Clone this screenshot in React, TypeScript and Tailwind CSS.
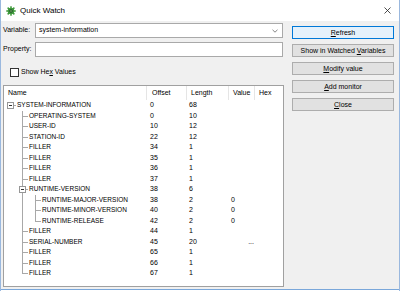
// Quick Watch — debugger dialog (COBOL group item view)

type Row = {
  name: string
  level: number
  open?: boolean
  last?: boolean
  off: string
  len: string
  value?: string
}

const ROWS: Row[] = [
  { name: 'SYSTEM-INFORMATION',    level: 0, open: true, off: '0',  len: '68' },
  { name: 'OPERATING-SYSTEM',      level: 1, off: '0',  len: '10' },
  { name: 'USER-ID',               level: 1, off: '10', len: '12' },
  { name: 'STATION-ID',            level: 1, off: '22', len: '12' },
  { name: 'FILLER',                level: 1, off: '34', len: '1' },
  { name: 'FILLER',                level: 1, off: '35', len: '1' },
  { name: 'FILLER',                level: 1, off: '36', len: '1' },
  { name: 'FILLER',                level: 1, off: '37', len: '1' },
  { name: 'RUNTIME-VERSION',       level: 1, open: true, off: '38', len: '6' },
  { name: 'RUNTIME-MAJOR-VERSION', level: 2, off: '38', len: '2', value: '0' },
  { name: 'RUNTIME-MINOR-VERSION', level: 2, off: '40', len: '2', value: '0' },
  { name: 'RUNTIME-RELEASE',       level: 2, last: true, off: '42', len: '2', value: '0' },
  { name: 'FILLER',                level: 1, off: '44', len: '1' },
  { name: 'SERIAL-NUMBER',         level: 1, off: '45', len: '20', value: '...' },
  { name: 'FILLER',                level: 1, off: '65', len: '1' },
  { name: 'FILLER',                level: 1, off: '66', len: '1' },
  { name: 'FILLER',                level: 1, last: true, off: '67', len: '1' },
]

// x of the connector line per tree level (relative to the Name cell)
const LINE_X = [6, 18, 31]

function TreeName({ row }: { row: Row }) {
  const x = LINE_X[row.level]
  return (
    <div className="relative h-full">
      {/* parent's line keeps going while we're inside RUNTIME-VERSION */}
      {row.level >= 2 && (
        <span className="absolute top-0 bottom-0 w-px bg-[#a8a8a8]" style={{ left: LINE_X[1] }} />
      )}
      {row.level >= 1 && (
        <span
          className={`absolute top-0 w-px bg-[#a8a8a8] ${row.last ? 'h-[5px]' : 'bottom-0'}`}
          style={{ left: x }}
        />
      )}
      <span className="absolute top-[5px] h-px w-[6px] bg-[#a8a8a8]" style={{ left: x }} />
      {row.open && (
        <span
          className="absolute top-[2px] w-[7px] h-[7px] border border-[#969696] bg-white flex items-center justify-center"
          style={{ left: x - 3 }}
        >
          <span className="w-[3px] h-px bg-[#333]" />
        </span>
      )}
      <span className="absolute top-0 text-[6.5px] whitespace-nowrap" style={{ left: x + 7 }}>
        {row.name}
      </span>
    </div>
  )
}

function GearIcon() {
  return (
    <svg width="10" height="10" viewBox="0 0 20 20">
      <g fill="#3f9a3c">
        {[0, 45, 90, 135, 180, 225, 270, 315].map(a => (
          <rect key={a} x="8.5" y="0.5" width="3" height="5" transform={`rotate(${a} 10 10)`} />
        ))}
        <circle cx="10" cy="10" r="6.5" />
      </g>
      <circle cx="10" cy="10" r="3.5" fill="#1f4d2a" />
      <circle cx="10" cy="10" r="1.5" fill="#9ad07a" />
    </svg>
  )
}

function DlgButton({ pre, acc, post, primary }: { pre?: string; acc: string; post?: string; primary?: boolean }) {
  return (
    <button
      type="button"
      className={[
        'h-[13px] w-[102px] flex items-center justify-center text-[7px] leading-none',
        primary ? 'bg-[#e5f1fb] border border-[#0078d7]' : 'bg-[#e1e1e1] border border-[#adadad]',
      ].join(' ')}
    >
      <span className="whitespace-pre">{pre}<span className="underline">{acc}</span>{post}</span>
    </button>
  )
}

export default function App() {
  return (
    <div className="w-[400px] h-[291px] bg-white flex flex-col border-x border-[#9ab8de] font-['Liberation_Sans',Arial,sans-serif] text-black overflow-hidden">

      {/* ── title bar ── */}
      <div className="h-[21px] flex items-center pl-[5px] pr-[8px] shrink-0">
        <GearIcon />
        <span className="ml-[4px] text-[8px]">Quick Watch</span>
        <svg className="ml-auto" width="7" height="7" viewBox="0 0 7 7">
          <path d="M0.5 0.5 L6.5 6.5 M6.5 0.5 L0.5 6.5" stroke="#222" strokeWidth="0.8" />
        </svg>
      </div>

      {/* ── body ── */}
      <div className="h-[269px] bg-[#f0f0f0] border-b border-[#7aa7da] flex text-[7px]">

        {/* left side */}
        <div className="w-[291px] pl-[2px] pt-[2px] flex flex-col">
          <div className="h-[15px] flex items-center">
            <span className="w-[32px]">Variable:</span>
            <div className="w-[248px] h-full bg-white border border-[#a9a9a9] flex items-center pl-[3px] pr-[4px]">
              <span>system-information</span>
              <svg className="ml-auto" width="6" height="4" viewBox="0 0 6 4">
                <path d="M0.5 0.8 L3 3.2 L5.5 0.8" fill="none" stroke="#666" strokeWidth="0.8" />
              </svg>
            </div>
          </div>

          <div className="h-[15px] mt-[4px] flex items-center">
            <span className="w-[32px]">Property:</span>
            <div className="w-[248px] h-full bg-white border border-[#a9a9a9]" />
          </div>

          <div className="h-[9px] mt-[11px] pl-[7px] flex items-center">
            <span className="w-[9px] h-[9px] border border-[#333] bg-white" />
            <span className="ml-[2px]">Show He<span className="underline">x</span> Values</span>
          </div>

          {/* ── watch table ── */}
          <div className="mt-[8px] w-[281px] h-[202px] bg-white border border-[#a0a0a0] overflow-hidden">
            <div className="grid grid-cols-[143px_40px_42px_26px_1fr] h-[14px] items-stretch">
              <div className="pl-[4px] flex items-center border-r border-[#e5e5e5]">Name</div>
              <div className="pl-[5px] flex items-center border-r border-[#e5e5e5]">Offset</div>
              <div className="pl-[4px] flex items-center border-r border-[#e5e5e5]">Length</div>
              <div className="pl-[4px] flex items-center border-r border-[#e5e5e5]">Value</div>
              <div className="pl-[4px] flex items-center">Hex</div>
            </div>
            {ROWS.map((r, i) => (
              <div key={i} className="grid grid-cols-[143px_40px_42px_26px_1fr] h-[10.5px] leading-[10.5px]">
                <TreeName row={r} />
                <div className="pl-[3px]">{r.off}</div>
                <div className="pl-[2px]">{r.len}</div>
                <div className={r.value === '...' ? 'text-right pr-[1px]' : 'pl-[2px]'}>{r.value}</div>
                <div />
              </div>
            ))}
          </div>
        </div>

        {/* right side buttons */}
        <div className="pt-[5px] flex flex-col gap-[5px]">
          <DlgButton acc="R" post="efresh" primary />
          <DlgButton pre="Show in Watched " acc="V" post="ariables" />
          <DlgButton acc="M" post="odify value" />
          <DlgButton acc="A" post="dd monitor" />
          <DlgButton acc="C" post="lose" />
        </div>
      </div>
    </div>
  )
}
